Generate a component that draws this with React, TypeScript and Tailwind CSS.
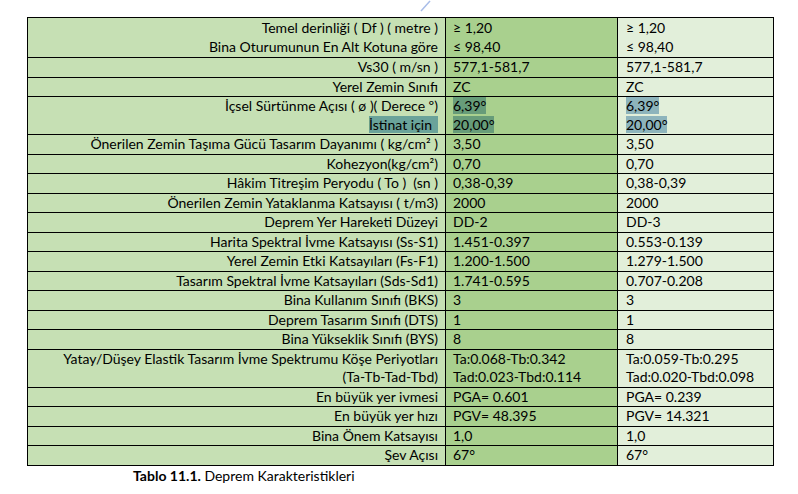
import React from "react";

type Row = {
  label: string[];
  a: string[];
  b: string[];
  tall?: boolean;
};

const rows: Row[] = [
  {
    label: ["Temel derinliği ( Df ) ( metre )", "Bina Oturumunun En Alt Kotuna göre"],
    a: ["≥ 1,20", "≤ 98,40"],
    b: ["≥ 1,20", "≤ 98,40"],
    tall: true,
  },
  { label: ["Vs30 ( m/sn )"], a: ["577,1-581,7"], b: ["577,1-581,7"] },
  { label: ["Yerel Zemin Sınıfı"], a: ["ZC"], b: ["ZC"] },
  { label: ["Önerilen Zemin Taşıma Gücü Tasarım Dayanımı ( kg/cm² )"], a: ["3,50"], b: ["3,50"] },
  { label: ["Kohezyon(kg/cm²)"], a: ["0,70"], b: ["0,70"] },
  { label: ["Hâkim Titreşim Peryodu ( To )  (sn )"], a: ["0,38-0,39"], b: ["0,38-0,39"] },
  { label: ["Önerilen Zemin Yataklanma Katsayısı ( t/m3)"], a: ["2000"], b: ["2000"] },
  { label: ["Deprem Yer Hareketi Düzeyi"], a: ["DD-2"], b: ["DD-3"] },
  { label: ["Harita Spektral İvme Katsayısı (Ss-S1)"], a: ["1.451-0.397"], b: ["0.553-0.139"] },
  { label: ["Yerel Zemin Etki Katsayıları (Fs-F1)"], a: ["1.200-1.500"], b: ["1.279-1.500"] },
  { label: ["Tasarım Spektral İvme Katsayıları (Sds-Sd1)"], a: ["1.741-0.595"], b: ["0.707-0.208"] },
  { label: ["Bina Kullanım Sınıfı (BKS)"], a: ["3"], b: ["3"] },
  { label: ["Deprem Tasarım Sınıfı (DTS)"], a: ["1"], b: ["1"] },
  { label: ["Bina Yükseklik Sınıfı (BYS)"], a: ["8"], b: ["8"] },
  {
    label: ["Yatay/Düşey Elastik Tasarım İvme Spektrumu Köşe Periyotları", "(Ta-Tb-Tad-Tbd)"],
    a: ["Ta:0.068-Tb:0.342", "Tad:0.023-Tbd:0.114"],
    b: ["Ta:0.059-Tb:0.295", "Tad:0.020-Tbd:0.098"],
  },
  { label: ["En büyük yer ivmesi"], a: ["PGA= 0.601"], b: ["PGA= 0.239"] },
  { label: ["En büyük yer hızı"], a: ["PGV= 48.395"], b: ["PGV= 14.321"] },
  { label: ["Bina Önem Katsayısı"], a: ["1,0"], b: ["1,0"] },
  { label: ["Şev Açısı"], a: ["67°"], b: ["67°"] },
];

const Lines = ({ items }: { items: string[] }) => (
  <>
    {items.map((t, i) => (
      <div key={i} className="whitespace-pre">
        {t}
      </div>
    ))}
  </>
);

const App = () => {
  return (
    <div
      className="relative w-[798px] h-[494px] bg-white text-black"
      style={{ fontFamily: "Lato, 'Open Sans', sans-serif" }}
    >
      <svg className="absolute left-[418px] top-0" width="16" height="12">
        <line x1="3" y1="11" x2="12" y2="1" stroke="#a9bde8" strokeWidth="1.5" />
      </svg>

      <div className="pt-[17px] pl-[27px]">
        <table className="table-fixed border-collapse text-[14px] leading-[18.5px]">
          <colgroup>
            <col className="w-[418px]" />
            <col className="w-[172px]" />
            <col className="w-[156px]" />
          </colgroup>
          <tbody>
            {rows.slice(0, 3).map((r, i) => (
              <tr key={i}>
                <td className={`border border-black bg-[#c6e0b4] pr-[7px] text-right align-top ${r.tall ? "py-[1px]" : ""}`}>
                  <Lines items={r.label} />
                </td>
                <td className={`border border-black bg-[#a9d08e] pl-[7px] align-top ${r.tall ? "py-[1px]" : ""}`}>
                  <Lines items={r.a} />
                </td>
                <td className={`border border-black bg-[#e2efda] pl-[8px] align-top ${r.tall ? "py-[1px]" : ""}`}>
                  <Lines items={r.b} />
                </td>
              </tr>
            ))}
            <tr>
              <td className="border border-black bg-[#c6e0b4] pr-[7px] text-right align-top">
                <div>İçsel Sürtünme Açısı ( ø )( Derece º)</div>
                <div>
                  <span className="bg-[#6aa39a] pr-[6px]">İstinat için</span>
                </div>
              </td>
              <td className="border border-black bg-[#a9d08e] pl-[7px] align-top">
                <div>
                  <span className="bg-[#679c79]">6,39°</span>
                </div>
                <div>
                  <span className="bg-[#679c79]">20,00°</span>
                </div>
              </td>
              <td className="border border-black bg-[#e2efda] pl-[8px] align-top">
                <div>
                  <span className="bg-[#8db4bc]">6,39°</span>
                </div>
                <div>
                  <span className="bg-[#8db4bc]">20,00°</span>
                </div>
              </td>
            </tr>
            {rows.slice(3).map((r, i) => (
              <tr key={i}>
                <td className="border border-black bg-[#c6e0b4] pr-[7px] text-right align-top">
                  <Lines items={r.label} />
                </td>
                <td className="border border-black bg-[#a9d08e] pl-[7px] align-top">
                  <Lines items={r.a} />
                </td>
                <td className="border border-black bg-[#e2efda] pl-[8px] align-top">
                  <Lines items={r.b} />
                </td>
              </tr>
            ))}
          </tbody>
        </table>

        <p className="mt-[1px] pl-[106px] text-[14px] leading-[17px]">
          <span className="font-bold">Tablo 11.1.</span> Deprem Karakteristikleri
        </p>
      </div>
    </div>
  );
};

export default App;
